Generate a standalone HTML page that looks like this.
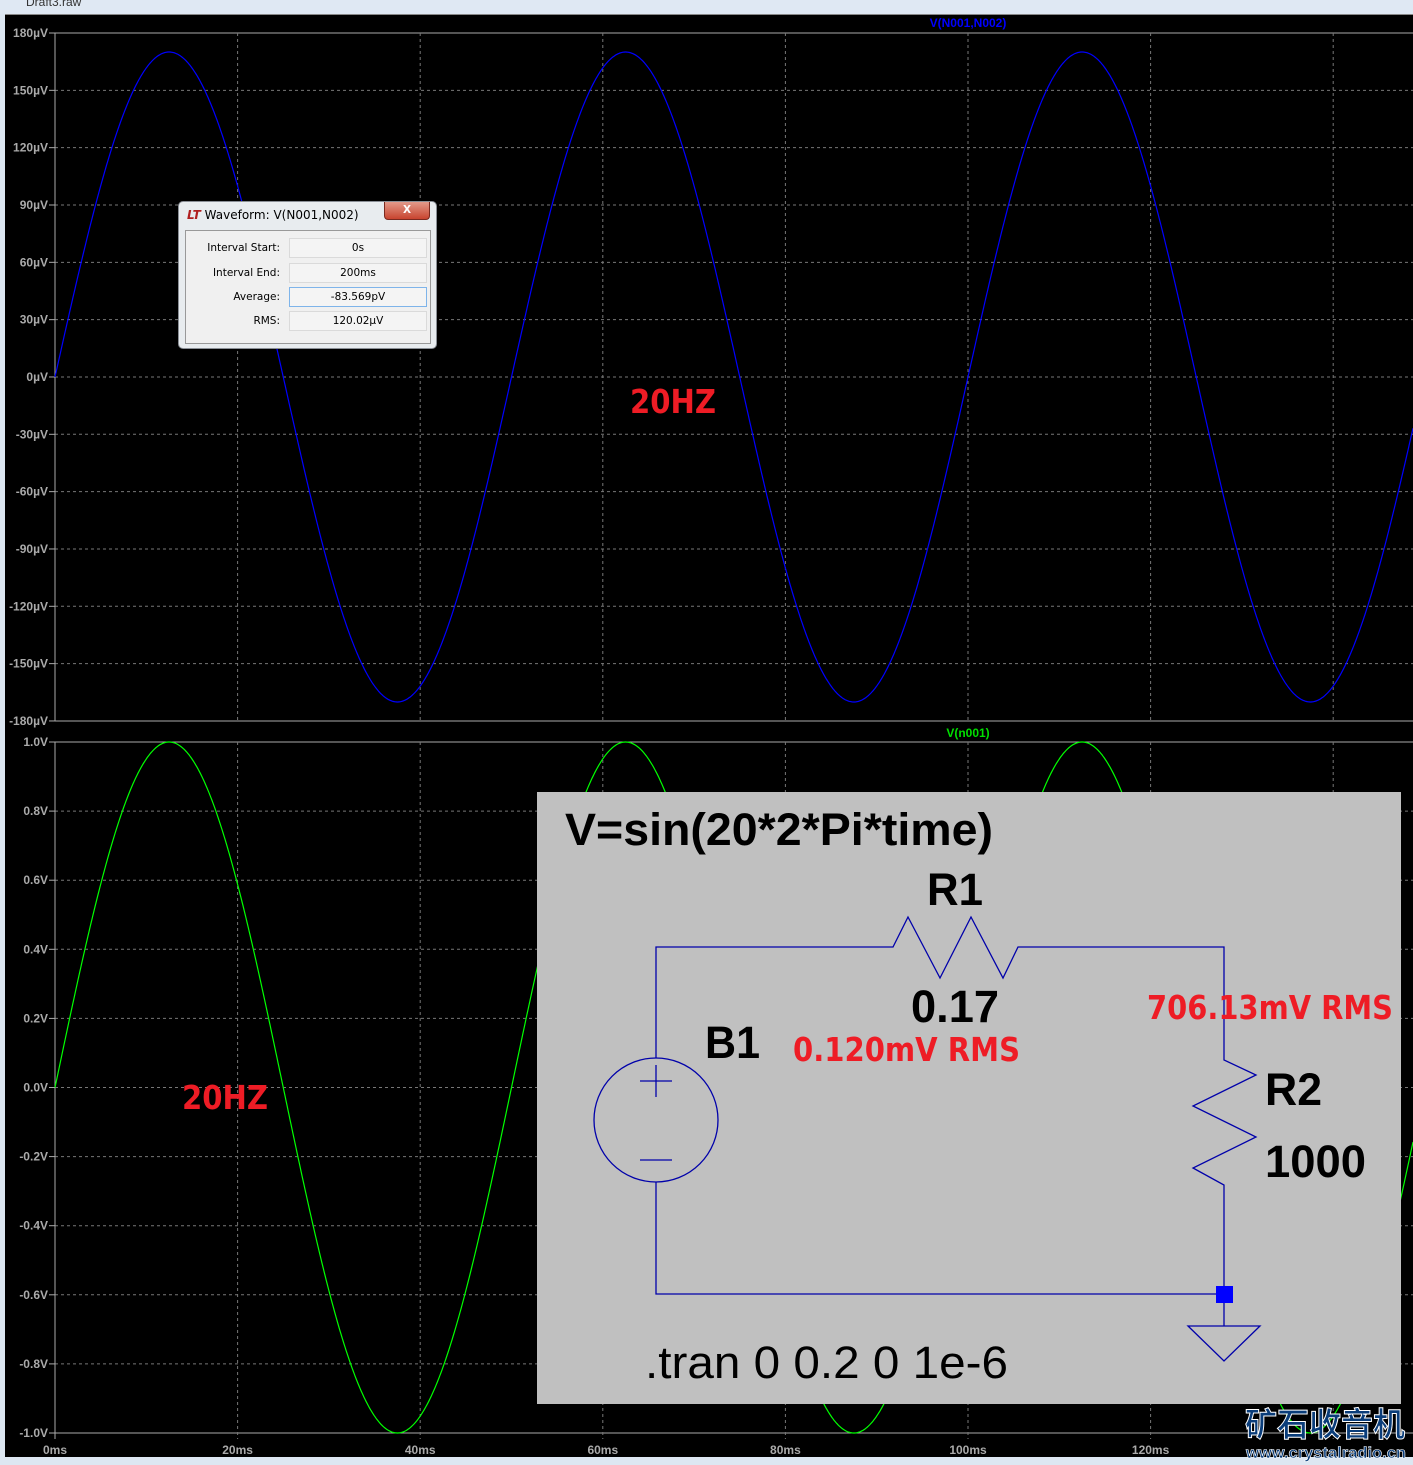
<!DOCTYPE html>
<html><head><meta charset="utf-8"><style>
html,body{margin:0;padding:0;width:1413px;height:1465px;overflow:hidden;background:#dde7f2}
svg{position:absolute;left:0;top:0}
.dlg{position:absolute;left:178px;top:201px;width:257px;height:146px;background:#e8ecef;border:1px solid #8a8f96;border-radius:5px;font-family:"DejaVu Sans","Liberation Sans",sans-serif;font-size:10.5px;color:#000}
</style></head><body>
<svg width="1413" height="1465" id="s" xmlns="http://www.w3.org/2000/svg"></svg>
<div class="dlg">
 <div style="position:absolute;left:8px;top:6px;font-size:12px"><span style="color:#b02020;font-weight:bold;font-style:italic">LT</span> Waveform: V(N001,N002)</div>
 <div style="position:absolute;right:6px;top:0;width:44px;height:17px;background:linear-gradient(#e39a8a,#c8442f);border:1px solid #7a2a20;border-top:none;border-radius:0 0 4px 4px;color:#fff;font-weight:bold;text-align:center;line-height:16px">X</div>
 <div style="position:absolute;left:6px;top:28px;width:244px;height:112px;border:1px solid #999;background:#f0f0f0"></div>
 <div style="position:absolute;left:0;width:101px;text-align:right;top:40px">Interval Start:</div>
 <div style="position:absolute;left:0;width:101px;text-align:right;top:65px">Interval End:</div>
 <div style="position:absolute;left:0;width:101px;text-align:right;top:89px">Average:</div>
 <div style="position:absolute;left:0;width:101px;text-align:right;top:113px">RMS:</div>
 <div style="position:absolute;left:110px;top:36px;width:136px;height:18px;border:1px solid #dadada;background:#f4f4f4;text-align:center;line-height:18px">0s</div>
 <div style="position:absolute;left:110px;top:61px;width:136px;height:18px;border:1px solid #dadada;background:#f4f4f4;text-align:center;line-height:18px">200ms</div>
 <div style="position:absolute;left:110px;top:85px;width:136px;height:18px;border:1px solid #7eb4ea;background:#f4f4f4;text-align:center;line-height:18px">-83.569pV</div>
 <div style="position:absolute;left:110px;top:109px;width:136px;height:18px;border:1px solid #dadada;background:#f4f4f4;text-align:center;line-height:18px">120.02µV</div>
</div>
<script>
var s=document.getElementById('s'),h='';
h+='<rect x="0" y="0" width="1413" height="14" fill="#dfe8f3"/><text x="26" y="6" font-family="Liberation Sans" font-size="12" fill="#333">Draft3.raw</text>';
h+='<rect x="5" y="14" width="1408" height="1443" fill="#000"/><rect x="5" y="14" width="1408" height="1" fill="#888"/>';
var xs=[];for(var i=0;i<8;i++)xs.push(55+i*182.6);
var lf='font-family="Liberation Sans" font-size="12" font-weight="bold" fill="#aaa" text-anchor="end"';
for(var i=0;i<=12;i++){var y=33+i*57.33;var v=180-30*i;var l=(v<0?'-':'')+Math.abs(v)+'µV';
h+='<line x1="55" x2="1413" y1="'+y+'" y2="'+y+'" stroke="'+(i==0||i==12?'#aaa':'#777')+'" '+(i==0||i==12?'':'stroke-dasharray="3,3"')+'/>';
h+='<line x1="49" x2="55" y1="'+y+'" y2="'+y+'" stroke="#aaa"/><text x="48" y="'+(y+4)+'" '+lf+'>'+l+'</text>';}
for(var i=0;i<=10;i++){var y=742+i*69.1;var v=(1-0.2*i);var l=(v<-0.001?'-':'')+Math.abs(v).toFixed(1)+'V';
h+='<line x1="55" x2="1413" y1="'+y+'" y2="'+y+'" stroke="'+(i==0||i==10?'#aaa':'#777')+'" '+(i==0||i==10?'':'stroke-dasharray="3,3"')+'/>';
h+='<line x1="49" x2="55" y1="'+y+'" y2="'+y+'" stroke="#aaa"/><text x="48" y="'+(y+4)+'" '+lf+'>'+l+'</text>';}
for(var i=0;i<8;i++){var x=xs[i];
h+='<line x1="'+x+'" x2="'+x+'" y1="33" y2="721" stroke="'+(i==0?'#aaa':'#777')+'" '+(i==0?'':'stroke-dasharray="3,3"')+'/>';
h+='<line x1="'+x+'" x2="'+x+'" y1="742" y2="1439" stroke="'+(i==0?'#aaa':'#777')+'" '+(i==0?'':'stroke-dasharray="3,3"')+'/>';
if(i<7)h+='<text x="'+x+'" y="1454" font-family="Liberation Sans" font-size="12" font-weight="bold" fill="#aaa" text-anchor="middle">'+(i*20)+'ms</text>';}
var p1='',p2='';for(var x=55;x<=1413;x+=1){var t=(x-55)/456.5*2*Math.PI;p1+=x+','+(377-325*Math.sin(t)).toFixed(1)+' ';p2+=x+','+(1087.5-345.5*Math.sin(t)).toFixed(1)+' ';}
h+='<polyline points="'+p1+'" fill="none" stroke="#0000ff" stroke-width="1.2"/>';
h+='<polyline points="'+p2+'" fill="none" stroke="#00ff00" stroke-width="1.2"/>';
h+='<text x="968" y="27" font-family="Liberation Sans" font-size="12" font-weight="bold" fill="#0000ff" text-anchor="middle">V(N001,N002)</text>';
h+='<text x="968" y="737" font-family="Liberation Sans" font-size="12" font-weight="bold" fill="#00e000" text-anchor="middle">V(n001)</text>';
var rf='font-family="DejaVu Sans" font-weight="bold" fill="#ee1c25" lengthAdjust="spacingAndGlyphs"';
h+='<text x="630" y="413" '+rf+' font-size="33" textLength="86">20HZ</text><text x="182" y="1109" '+rf+' font-size="33" textLength="86">20HZ</text>';
h+='<rect x="537" y="792" width="864" height="612" fill="#c0c0c0"/>';
var w='stroke="#0000aa" stroke-width="1.3" fill="none"';
h+='<polyline points="656,1058 656,947 893,947 908,917 940,978 971,917 1003,978 1018,947 1224,947 1224,1060 1256,1075 1193,1106 1256,1137 1193,1168 1224,1185 1224,1326" '+w+'/>';
h+='<polyline points="656,1182 656,1294 1224,1294" '+w+'/>';
h+='<circle cx="656" cy="1120" r="62" '+w+'/><line x1="640" x2="672" y1="1081" y2="1081" '+w+'/><line x1="656" x2="656" y1="1065" y2="1097" '+w+'/><line x1="640" x2="672" y1="1160" y2="1160" '+w+'/>';
h+='<rect x="1216" y="1286" width="17" height="17" fill="#0000ff"/><polygon points="1188,1326 1260,1326 1224,1361" '+w+'/>';
var bf='font-family="Liberation Sans" font-weight="bold" fill="#000" font-size="45" lengthAdjust="spacingAndGlyphs"';
h+='<text x="565" y="845" '+bf+' textLength="428">V=sin(20*2*Pi*time)</text><text x="927" y="905" '+bf+' textLength="56">R1</text><text x="911" y="1022" '+bf+' textLength="88">0.17</text><text x="705" y="1058" '+bf+' textLength="55">B1</text><text x="1265" y="1105" '+bf+' textLength="57">R2</text><text x="1265" y="1177" '+bf+' textLength="101">1000</text>';
h+='<text x="645" y="1378" font-family="Liberation Sans" fill="#000" font-size="45" textLength="363" lengthAdjust="spacingAndGlyphs">.tran 0 0.2 0 1e-6</text>';
h+='<text x="793" y="1061" '+rf+' font-size="33" textLength="227">0.120mV RMS</text><text x="1147" y="1019" '+rf+' font-size="33" textLength="246">706.13mV RMS</text>';
h+='<text x="1245" y="1436" font-family="Noto Sans CJK SC,sans-serif" font-weight="bold" font-size="33" fill="#0a3d7a" stroke="#fff" stroke-width="1" textLength="160" lengthAdjust="spacingAndGlyphs">矿石收音机</text>';
h+='<text x="1246" y="1458" font-family="Liberation Sans" font-weight="bold" font-size="16" fill="#0a3d7a" stroke="#fff" stroke-width="0.6" textLength="160" lengthAdjust="spacingAndGlyphs">www.crystalradio.cn</text>';
s.innerHTML=h;
</script>
</body></html>
